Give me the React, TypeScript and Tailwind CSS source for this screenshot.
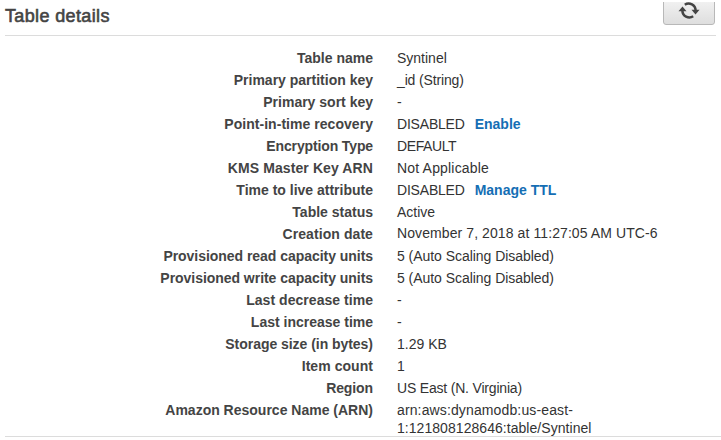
import type { ReactNode } from "react";

type Row = { label: string; value: ReactNode; labelClass?: string; valueClass?: string };

function Status({ action }: { action: string }) {
  return (
    <>
      <span className="tracking-[-0.2px]">DISABLED</span>
      <a href="#" className="ml-[10px] font-bold text-[#146eb4]">{action}</a>
    </>
  );
}

const rows: Row[] = [
  { label: "Table name", value: "Syntinel" },
  { label: "Primary partition key", value: "_id (String)", valueClass: "tracking-[-0.15px]" },
  { label: "Primary sort key", value: "-" },
  { label: "Point-in-time recovery", value: <Status action="Enable" />, labelClass: "tracking-[0.04px]" },
  { label: "Encryption Type", value: "DEFAULT", labelClass: "tracking-[-0.13px]", valueClass: "tracking-[-0.4px]" },
  { label: "KMS Master Key ARN", value: "Not Applicable", labelClass: "tracking-[0.1px]", valueClass: "tracking-[0.18px]" },
  { label: "Time to live attribute", value: <Status action="Manage TTL" /> },
  { label: "Table status", value: "Active" },
  { label: "Creation date", value: "November 7, 2018 at 11:27:05 AM UTC-6", labelClass: "tracking-[0.08px]", valueClass: "-mt-px tracking-[0.09px]" },
  { label: "Provisioned read capacity units", value: "5 (Auto Scaling Disabled)", labelClass: "tracking-[-0.04px]", valueClass: "tracking-[-0.04px]" },
  { label: "Provisioned write capacity units", value: "5 (Auto Scaling Disabled)", labelClass: "tracking-[-0.04px]", valueClass: "tracking-[-0.04px]" },
  { label: "Last decrease time", value: "-", labelClass: "tracking-[0.04px]" },
  { label: "Last increase time", value: "-" },
  { label: "Storage size (in bytes)", value: "1.29 KB", labelClass: "tracking-[-0.04px]" },
  { label: "Item count", value: "1", labelClass: "tracking-[0.05px]" },
  { label: "Region", value: "US East (N. Virginia)", labelClass: "tracking-[-0.1px]", valueClass: "tracking-[-0.19px]" },
  {
    label: "Amazon Resource Name (ARN)",
    value: (
      <>
        <span className="tracking-[0.13px]">arn:aws:dynamodb:us-east-</span>
        <br />
        1:121808128646:table/Syntinel
      </>
    ),
    valueClass: "tracking-[0.05px]",
  },
];

function RefreshIcon() {
  return (
    <svg width="22" height="20" viewBox="0 0 22 20" fill="none" stroke="#444" strokeWidth="2.5">
      <path d="M6.8 3.7A7 7 0 0 1 17.6 9.6" />
      <path d="M15.2 15.3A7 7 0 0 1 4.4 9.4" />
      <path d="M13.5 8.8h8L17.5 13.4z" fill="#444" stroke="none" />
      <path d="M0.5 10.2h8L4.5 5.6z" fill="#444" stroke="none" />
    </svg>
  );
}

export default function App() {
  return (
    <div className="flex h-[440px] w-[721px] flex-col overflow-hidden bg-white pl-[5px] font-['Liberation_Sans',Arial,sans-serif] text-[14px] text-[#444]">
      <header className="mr-[6px] flex h-[36px] shrink-0 justify-between">
        <h2 className="pt-[5px] text-[18px] leading-[22px] font-normal tracking-[0.36px] [-webkit-text-stroke:0.6px_#444]">Table details</h2>
        <div className="mt-[2px] h-[23px] overflow-hidden">
          <button aria-label="Refresh" className="-mt-[5px] flex h-[28px] w-[52px] items-end justify-center rounded-[3px] border border-[#b8b8b8] bg-linear-to-b from-[#f4f4f4] to-[#dedede] pb-[3px]">
            <RefreshIcon />
          </button>
        </div>
      </header>
      <div className="-mt-px mr-[5px] h-px shrink-0 bg-[#dcdcdc]" />
      <dl className="flex h-[401px] shrink-0 flex-col border-b border-[#dcdcdc] pt-[11px]">
        {rows.map((row) => (
          <div key={row.label} className="flex h-[22px] shrink-0 gap-[24px] leading-[18px] whitespace-nowrap">
            <dt className={`w-[368px] pt-[2px] text-right font-bold ${row.labelClass ?? ""}`}>{row.label}</dt>
            <dd className={`pt-[2px] text-[#333] ${row.valueClass ?? ""}`}>{row.value}</dd>
          </div>
        ))}
      </dl>
    </div>
  );
}
